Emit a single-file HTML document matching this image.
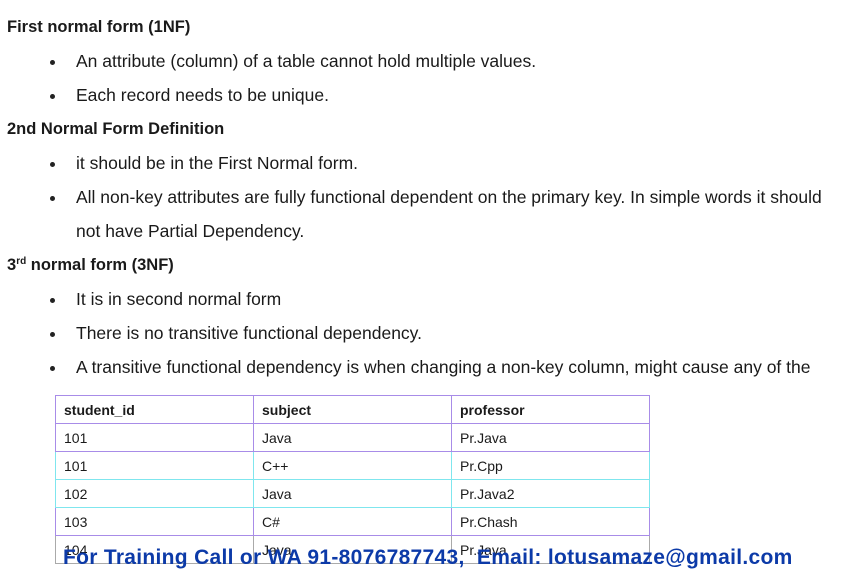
<!DOCTYPE html>
<html><head><meta charset="utf-8"><style>
body{margin:0;width:845px;height:568px;overflow:hidden;background:#fff;font-family:"Liberation Sans",sans-serif;color:#1a1a1a;position:relative}
.l{position:absolute;font-size:17.5px;white-space:nowrap;line-height:20px}
.h{font-weight:bold;left:7px;font-size:16.5px}
.b{left:76px}
.d{position:absolute;left:50px;width:5px;height:5px;border-radius:50%;background:#222}
sup{font-size:10px;line-height:0;vertical-align:6px}
table{position:absolute;left:55px;top:395px;border-collapse:collapse;font-size:14px}
td{width:198px;height:28px;border:1px solid #a88ce8;padding:0 0 0 8px;box-sizing:border-box}
th{width:198px;height:28px;border:1px solid #a88ce8;padding:0 0 0 8px;text-align:left;box-sizing:border-box;font-size:14px}
.c td{border-color:#7fe6ee}
.f{position:absolute;left:63px;top:546px;font-weight:bold;font-size:21px;color:#0c3aa8;white-space:nowrap;letter-spacing:0.3px}
</style></head><body>
<div class="l h" style="top:17px">First normal form (1NF)</div>
<div class="d" style="top:60px"></div><div class="l b" style="top:51px">An attribute (column) of a table cannot hold multiple values.</div>
<div class="d" style="top:94px"></div><div class="l b" style="top:85px">Each record needs to be unique.</div>
<div class="l h" style="top:119px">2nd Normal Form Definition</div>
<div class="d" style="top:162px"></div><div class="l b" style="top:153px">it should be in the First Normal form.</div>
<div class="d" style="top:196px"></div><div class="l b" style="top:187px">All non-key attributes are fully functional dependent on the primary key. In simple words it should</div>
<div class="l b" style="top:221px">not have Partial Dependency.</div>
<div class="l h" style="top:255px">3<sup>rd</sup> normal form (3NF)</div>
<div class="d" style="top:298px"></div><div class="l b" style="top:289px">It is in second normal form</div>
<div class="d" style="top:332px"></div><div class="l b" style="top:323px">There is no transitive functional dependency.</div>
<div class="d" style="top:366px"></div><div class="l b" style="top:357px">A transitive functional dependency is when changing a non-key column, might cause any of the</div>
<table>
<tr><th>student_id</th><th>subject</th><th>professor</th></tr>
<tr><td>101</td><td>Java</td><td>Pr.Java</td></tr>
<tr class="c"><td>101</td><td>C++</td><td>Pr.Cpp</td></tr>
<tr class="c"><td>102</td><td>Java</td><td>Pr.Java2</td></tr>
<tr><td>103</td><td>C#</td><td>Pr.Chash</td></tr>
<tr><td style="border-color:#aaa">104</td><td style="border-color:#aaa">Java</td><td style="border-color:#aaa">Pr.Java</td></tr>
</table>
<div class="f">For Training Call or WA 91-8076787743, &nbsp;Email: lotusamaze@gmail.com</div>
</body></html>
